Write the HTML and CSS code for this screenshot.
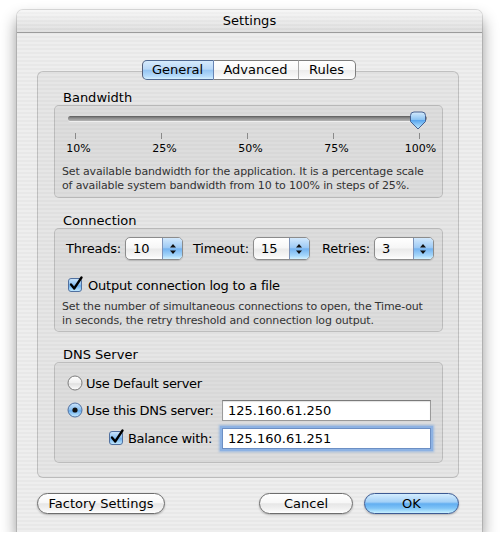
FILE: index.html
```html
<!DOCTYPE html>
<html>
<head>
<meta charset="utf-8">
<title>Settings</title>
<link rel="stylesheet" href="styles.css">
</head>
<body>
<div class="window">
  <div class="titlebar">Settings</div>
  <div class="content">
    <div class="tabbox">
      <div class="tabs">
        <div class="seg seg-general sel">General</div>
        <div class="seg seg-advanced">Advanced</div>
        <div class="seg seg-rules">Rules</div>
      </div>

      <div class="group-label">Bandwidth</div>
      <div class="group group-bw">
        <div class="slider">
          <div class="track"></div>
          <svg class="thumb" width="18" height="19" viewBox="0 0 18 19">
            <defs>
              <linearGradient id="tg" x1="0" y1="0" x2="0" y2="1">
                <stop offset="0" stop-color="#d6ebfc"/>
                <stop offset="0.45" stop-color="#8cc4f3"/>
                <stop offset="0.5" stop-color="#5aa6ee"/>
                <stop offset="1" stop-color="#c4ecff"/>
              </linearGradient>
            </defs>
            <path d="M1.5,4.5 Q1.5,1 5,1 H13 Q16.5,1 16.5,4.5 V10.5 L9,18 L1.5,10.5 Z" fill="url(#tg)" stroke="#46608f" stroke-width="1"/>
          </svg>
        </div>
        <div class="ticks">
          <div class="tick"><span class="mark"></span><span class="tl">10%</span></div>
          <div class="tick"><span class="mark"></span><span class="tl">25%</span></div>
          <div class="tick"><span class="mark"></span><span class="tl">50%</span></div>
          <div class="tick"><span class="mark"></span><span class="tl">75%</span></div>
          <div class="tick"><span class="mark"></span><span class="tl">100%</span></div>
        </div>
        <p class="desc desc-bw">Set available bandwidth for the application. It is a percentage scale of available system bandwidth from 10 to 100% in steps of 25%.</p>
      </div>

      <div class="group-label">Connection</div>
      <div class="group group-conn">
        <div class="conn-row">
          <span class="lbl">Threads:</span>
          <div class="popup popup-threads"><span class="pv">10</span><span class="pa"><svg width="8" height="12" viewBox="0 0 8 12"><path d="M1,4.5 H7 L4,1 Z M1,7.5 H7 L4,11 Z" fill="#111"/></svg></span></div>
          <span class="lbl">Timeout:</span>
          <div class="popup popup-timeout"><span class="pv">15</span><span class="pa"><svg width="8" height="12" viewBox="0 0 8 12"><path d="M1,4.5 H7 L4,1 Z M1,7.5 H7 L4,11 Z" fill="#111"/></svg></span></div>
          <span class="lbl">Retries:</span>
          <div class="popup popup-retries"><span class="pv">3</span><span class="pa"><svg width="8" height="12" viewBox="0 0 8 12"><path d="M1,4.5 H7 L4,1 Z M1,7.5 H7 L4,11 Z" fill="#111"/></svg></span></div>
        </div>
        <div class="check-row">
          <svg class="checkbox" width="16" height="16" viewBox="0 0 16 16">
            <defs>
              <linearGradient id="cg" x1="0" y1="0" x2="0" y2="1">
                <stop offset="0" stop-color="#cfe6fb"/>
                <stop offset="0.5" stop-color="#86bdf0"/>
                <stop offset="0.55" stop-color="#6aaeee"/>
                <stop offset="1" stop-color="#c8ecff"/>
              </linearGradient>
            </defs>
            <rect x="0.5" y="2.5" width="13" height="13" rx="2.5" fill="url(#cg)" stroke="#51709f"/>
            <path d="M3,8.5 L6.2,12.5 L13.5,1.5" fill="none" stroke="#000" stroke-width="2.3" stroke-linecap="round" stroke-linejoin="round"/>
          </svg>
          <span class="check-label">Output connection log to a file</span>
        </div>
        <p class="desc desc-conn">Set the number of simultaneous connections to open, the Time-out in seconds, the retry threshold and connection log output.</p>
      </div>

      <div class="group-label">DNS Server</div>
      <div class="group group-dns">
        <div class="dns-row dns-row1">
          <svg class="radio" width="16" height="16" viewBox="0 0 16 16">
            <defs>
              <linearGradient id="rg" x1="0" y1="0" x2="0" y2="1">
                <stop offset="0" stop-color="#ffffff"/>
                <stop offset="0.5" stop-color="#f0f0f0"/>
                <stop offset="0.55" stop-color="#e0e0e0"/>
                <stop offset="1" stop-color="#ffffff"/>
              </linearGradient>
            </defs>
            <circle cx="8" cy="8" r="7" fill="url(#rg)" stroke="#7c7c7c"/>
          </svg>
          <span class="opt-label">Use Default server</span>
        </div>
        <div class="dns-row dns-row2">
          <div class="dns-left">
            <svg class="radio" width="16" height="16" viewBox="0 0 16 16">
              <defs>
                <linearGradient id="rb" x1="0" y1="0" x2="0" y2="1">
                  <stop offset="0" stop-color="#cfe6fb"/>
                  <stop offset="0.5" stop-color="#86bdf0"/>
                  <stop offset="0.55" stop-color="#6aaeee"/>
                  <stop offset="1" stop-color="#c8ecff"/>
                </linearGradient>
              </defs>
              <circle cx="8" cy="8" r="7" fill="url(#rb)" stroke="#51709f"/>
              <circle cx="8" cy="8" r="2.6" fill="#111"/>
            </svg>
            <span class="opt-label">Use this DNS server:</span>
          </div>
          <div class="field">125.160.61.250</div>
        </div>
        <div class="dns-row dns-row3">
          <div class="dns-left">
            <svg class="checkbox" width="16" height="16" viewBox="0 0 16 16">
              <rect x="0.5" y="2.5" width="13" height="13" rx="2.5" fill="url(#cg)" stroke="#51709f"/>
              <path d="M3,8.5 L6.2,12.5 L13.5,1.5" fill="none" stroke="#000" stroke-width="2.3" stroke-linecap="round" stroke-linejoin="round"/>
            </svg>
            <span class="opt-label">Balance with:</span>
          </div>
          <div class="field focus">125.160.61.251</div>
        </div>
      </div>
    </div>

    <div class="buttons">
      <div class="btn btn-factory">Factory Settings</div>
      <div class="spacer"></div>
      <div class="btn btn-cancel">Cancel</div>
      <div class="btn btn-ok">OK</div>
    </div>
  </div>
</div>
</body>
</html>
```

FILE: styles.css
```css
html, body {
  margin: 0;
  padding: 0;
  background: #ffffff;
}

body {
  font-family: "DejaVu Sans", "Liberation Sans", sans-serif;
  font-size: 13px;
  color: #000;
  white-space: nowrap;
}

.window {
  margin: 10px 0 0 17px;
  width: 465px;
  height: 522px;
  border-radius: 6px 6px 0 0;
  background: repeating-linear-gradient(to bottom, #eeeeee 0, #eeeeee 2px, #e8e8e8 2px, #e8e8e8 4px);
  box-shadow: 0 0 0 1px rgba(0,0,0,0.12), 0 9px 16px rgba(0,0,0,0.45);
  overflow: hidden;
}

.titlebar {
  height: 22px;
  line-height: 22px;
  text-align: center;
  font-size: 13px;
  border-bottom: 1px solid #9c9c9c;
  background: linear-gradient(to bottom, rgba(255,255,255,0.5), rgba(0,0,0,0.06)),
              repeating-linear-gradient(to bottom, #eeeeee 0, #eeeeee 2px, #e6e6e6 2px, #e6e6e6 4px);
  border-radius: 6px 6px 0 0;
}

.content {
  padding: 38px 0 0 20px;
}

.tabbox {
  width: 420px;
  border: 1px solid rgba(0,0,0,0.17);
  border-radius: 6px;
  background: rgba(0,0,0,0.03);
  padding-bottom: 14px;
}

.tabs {
  display: flex;
  justify-content: center;
  margin-top: -12px;
  margin-left: 1px;
}

.seg {
  height: 18px;
  line-height: 18px;
  text-align: center;
  font-size: 13px;
  border-top: 1px solid #7e7e7e;
  border-bottom: 1px solid #7e7e7e;
  border-right: 1px solid #a8a8a8;
  background: linear-gradient(to bottom, #ffffff 0%, #f8f8f8 48%, #ececec 52%, #f7f7f7 85%, #ffffff 100%);
}

.seg-general {
  width: 70px;
  border-left: 1px solid #555f7a;
  border-radius: 5px 0 0 5px;
  border-right-color: #6784b4;
}

.seg.sel {
  background: linear-gradient(to bottom, #d6eafc 0%, #b9d8f7 45%, #96c5f2 52%, #b6dcfb 85%, #d7f1ff 100%);
  border-top-color: #4f6890;
  border-bottom-color: #4f6890;
}

.seg-advanced {
  width: 84px;
}

.seg-rules {
  width: 56px;
  border-right: 1px solid #7e7e7e;
  border-radius: 0 5px 5px 0;
}

.group-label {
  margin: 10px 0 0 25px;
  height: 15px;
  line-height: 15px;
  font-size: 13px;
}

.group {
  margin: 0 0 0 16px;
  width: 387px;
  border: 1px solid rgba(0,0,0,0.15);
  border-radius: 5px;
  background: rgba(0,0,0,0.035);
}

.group-bw {
  padding: 4px 0 4px 0;
}

.slider {
  position: relative;
  height: 20px;
  margin-left: 13px;
  width: 359px;
}

.track {
  position: absolute;
  left: 0;
  right: 0;
  top: 6px;
  height: 5px;
  border-radius: 3px;
  background: linear-gradient(to bottom, #5b5b5b 0%, #8b8b8b 40%, #b5b5b5 100%);
  box-shadow: 0 1px 0 rgba(255,255,255,0.6);
}

.thumb {
  position: absolute;
  left: 341px;
  top: 1px;
}

.ticks {
  display: flex;
  justify-content: space-between;
  width: 384px;
  margin-top: 3px;
}

.tick {
  width: 40px;
  display: flex;
  flex-direction: column;
  align-items: center;
}

.mark {
  width: 1px;
  height: 6px;
  background: #8a8a8a;
}

.tl {
  margin-top: 3px;
  height: 13px;
  line-height: 13px;
  font-size: 11px;
  padding-left: 7px;
}

.tick:last-child .tl {
  padding-left: 3px;
}

.desc {
  margin: 10px 0 0 7px;
  width: 366px;
  white-space: normal;
  font-size: 11px;
  line-height: 14px;
  color: #333;
  letter-spacing: -0.15px;
}

.group-bw + .group-label {
  margin-top: 15px;
}

.group-conn {
  padding: 8px 0 3px 0;
}

.group-conn + .group-label {
  margin-top: 15px;
}

.conn-row {
  display: flex;
  align-items: center;
  height: 23px;
  padding-left: 11px;
}

.lbl {
  margin-right: 4px;
  font-size: 13px;
  letter-spacing: -0.2px;
}

.popup {
  display: flex;
  height: 21px;
  border: 1px solid #8c8c8c;
  border-radius: 5px;
  background: linear-gradient(to bottom, #ffffff 0%, #f6f6f6 48%, #eaeaea 52%, #f6f6f6 85%, #ffffff 100%);
  box-shadow: 0 1px 1px rgba(0,0,0,0.15);
  overflow: hidden;
}

.popup-threads { width: 56px; margin-right: 10px; }
.popup-timeout { width: 55px; margin-right: 12px; }
.popup-retries { width: 58px; }

.pv {
  flex: 1;
  padding-left: 7px;
  line-height: 21px;
  font-size: 13px;
}

.pa {
  width: 19px;
  display: flex;
  align-items: center;
  justify-content: center;
  border-left: 1px solid #7d93b8;
  background: linear-gradient(to bottom, #d2e8fc 0%, #9fcbf5 45%, #74b3f0 52%, #a7d8fb 85%, #d4f2ff 100%);
}

.check-row {
  display: flex;
  align-items: center;
  height: 18px;
  margin-top: 16px;
  padding-left: 13px;
}

.checkbox {
  flex: none;
  margin-top: -3px;
}

.check-label {
  margin-left: 4px;
  font-size: 13px;
  letter-spacing: -0.2px;
}

.desc-conn {
  margin-top: 6px;
  line-height: 14px;
}

.group-dns {
  padding: 10px 0 13px 0;
}

.dns-row {
  display: flex;
  align-items: center;
}

.dns-row1 {
  height: 20px;
  padding-left: 12px;
}

.dns-row2, .dns-row3 {
  height: 22px;
  margin-top: 6px;
}

.dns-left {
  flex: none;
  width: 157px;
  display: flex;
  align-items: center;
  justify-content: flex-end;
}

.dns-row2 .dns-left {
  justify-content: flex-start;
  padding-left: 12px;
  width: 145px;
}

.radio {
  flex: none;
}

.opt-label {
  margin-left: 3px;
  font-size: 13px;
  letter-spacing: -0.3px;
}

.field {
  flex: none;
  margin-left: 10px;
  width: 202px;
  height: 19px;
  line-height: 19px;
  padding-left: 5px;
  border: 1px solid #9a9a9a;
  border-top-color: #7a7a7a;
  background: #fff;
  font-size: 13px;
  box-shadow: inset 0 1px 1px rgba(0,0,0,0.12);
}

.field.focus {
  box-shadow: 0 0 0 2px #8db2e3, 0 0 2px 3px rgba(110,160,225,0.6);
  border-color: #6c8fc4;
}

.buttons {
  display: flex;
  margin-top: 15px;
  width: 422px;
}

.spacer {
  flex: 1;
}

.btn {
  height: 19px;
  line-height: 19px;
  text-align: center;
  font-size: 13px;
  border: 1px solid #6d6d6d;
  border-radius: 11px;
  background: linear-gradient(to bottom, #ffffff 0%, #f7f7f7 45%, #e6e6e6 52%, #f2f2f2 80%, #ffffff 100%);
  box-shadow: 0 1px 2px rgba(0,0,0,0.25);
}

.btn-factory { width: 126px; }
.btn-cancel { width: 92px; margin-right: 11px; }
.btn-ok {
  width: 93px;
  border-color: #3c5a93;
  background: linear-gradient(to bottom, #d4edfe 0%, #a3d0f7 42%, #62aef1 52%, #7fc4f7 75%, #c8f1ff 100%);
}
```
